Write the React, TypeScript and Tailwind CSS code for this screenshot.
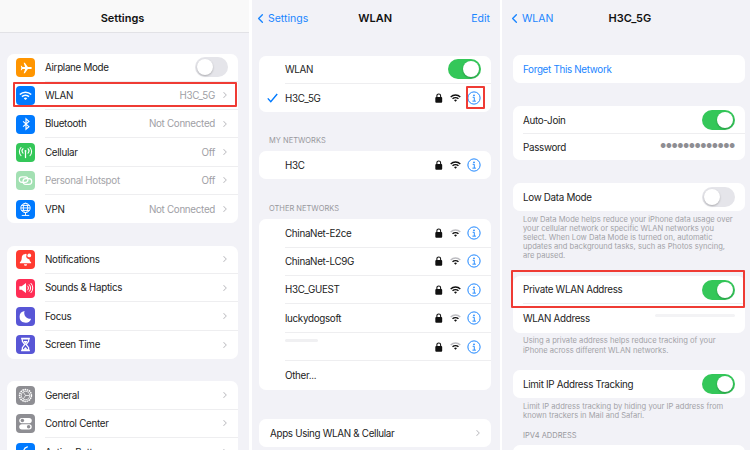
import React from "react";
import { ChevronLeft, ChevronRight } from "lucide-react";

const Plane = () => (
  <svg viewBox="0 0 24 24" className="w-[14px] h-[14px]" fill="#fff"><path d="M22 12c0-1-1-1.700-2.200-1.700h-4.600L10 3H8l2.500 7.300H6L4.300 8H3l1 4-1 4h1.300L6 13.700h4.500L8 21h2l5.200-7.300h4.600C21 13.700 22 13 22 12z" /></svg>
);
const WifiGlyph = ({ c = "#fff", w = 14, faint = false }: { c?: string; w?: number; faint?: boolean }) => (
  <svg viewBox="0 0 24 18" style={{ width: w, height: (w * 18) / 24 }} fill="none" stroke={c} strokeWidth="3" strokeLinecap="butt">
    <path d="M1.500 6.500a15 15 0 0 1 21 0" stroke={faint ? "#bdbdc2" : c} />
    <path d="M5.500 10.500a9.500 9.500 0 0 1 13 0" />
    <path d="M12 16.800 8.800 13.700a4.600 4.600 0 0 1 6.400 0z" fill={c} stroke="none" />
  </svg>
);
const Bt = () => (
  <svg viewBox="0 0 24 24" className="w-[14px] h-[14px]" fill="none" stroke="#fff" strokeWidth="2"><path d="M7 7.500l10 9-5 4.500V3l5 4.500-10 9" /></svg>
);
const Antenna = () => (
  <svg viewBox="0 0 24 24" className="w-[15px] h-[15px]" fill="none" stroke="#fff" strokeWidth="1.700" strokeLinecap="round"><path d="M12 11v9" strokeWidth="2" /><circle cx="12" cy="9.500" r="1.600" fill="#fff" stroke="none" /><path d="M8 6c-2 2-2 5 0 7M16 6c2 2 2 5 0 7M4.800 4c-3.400 3.500-3.400 9.500 0 13M19.200 4c3.400 3.500 3.400 9.500 0 13" /></svg>
);
const Chain = () => (
  <svg viewBox="0 0 24 24" className="w-[15px] h-[15px]" fill="none" stroke="#fff" strokeWidth="2"><rect x="2" y="6" width="14" height="9" rx="4.500" /><rect x="8" y="9" width="14" height="9" rx="4.500" /></svg>
);
const Globe = () => (
  <svg viewBox="0 0 24 24" className="w-[15px] h-[15px]" fill="none" stroke="#fff" strokeWidth="1.500"><circle cx="12" cy="9.500" r="7.500" /><ellipse cx="12" cy="9.500" rx="3.500" ry="7.500" /><path d="M4.500 9.500h15M5.500 5.500h13M5.500 13.500h13M12 17v4M6 21.500h12" /></svg>
);
const Bell = () => (
  <svg viewBox="0 0 24 24" className="w-[15px] h-[15px]" fill="#fff"><path d="M12 3c-4 0-6 3-6 6.500 0 3-1 5-3 7v1.500h18V16.500c-1.500-1.500-2.500-3-2.800-5A4.500 4.500 0 0 1 13.500 5.500c0-1 .2-1.500.4-2.200A6 6 0 0 0 12 3z" /><circle cx="18" cy="5.500" r="3" /><path d="M9.500 19.500h5a2.500 2.500 0 0 1-5 0z" /></svg>
);
const Sound = () => (
  <svg viewBox="0 0 24 24" className="w-[16px] h-[16px]" fill="#fff"><path d="M2 9.500h3.500L12 4.500v15l-6.500-5H2z" /><path d="M14.500 9a4 4 0 0 1 0 6M17 7a7 7 0 0 1 0 10M19.500 5a10 10 0 0 1 0 14" fill="none" stroke="#fff" strokeWidth="1.500" strokeLinecap="round" /></svg>
);
const Moon = () => (
  <svg viewBox="0 0 24 24" className="w-[15px] h-[15px]" fill="#fff"><path d="M10.500 3a9.500 9.500 0 1 0 10.500 12.500A9.500 9.500 0 0 1 10.500 3z" /></svg>
);
const Hourglass = () => (
  <svg viewBox="0 0 24 24" className="w-[15px] h-[15px]" fill="none" stroke="#fff" strokeWidth="2"><path d="M5 2.500h14M5 21.500h14" strokeWidth="2.600" /><path d="M7 3.500v3.500l4 5-4 5v3.500h10v-3.500l-4-5 4-5V3.500" /><path d="M8.500 6.500h7L12 11zM8.500 20l3.500-4 3.500 4z" fill="#fff" stroke="none" /></svg>
);
const Gear = () => (
  <svg viewBox="0 0 24 24" className="w-[15px] h-[15px]" fill="none" stroke="#fff"><circle cx="12" cy="12" r="9.500" strokeWidth="2.400" strokeDasharray="2.500 1" /><circle cx="12" cy="12" r="6.800" strokeWidth="1.200" /><path d="M12 12 8.500 6.500M12 12h6.500M12 12l-3.500 5.500" strokeWidth="1.200" /></svg>
);
const Toggles = () => (
  <svg viewBox="0 0 24 24" className="w-[15px] h-[15px]"><rect x="2" y="3" width="20" height="8.500" rx="4.250" fill="#fff" /><circle cx="7" cy="7.250" r="2.800" fill="#8e8e93" /><rect x="2" y="13" width="20" height="8.500" rx="4.250" fill="#fff" /><circle cx="17" cy="17.250" r="2.800" fill="#8e8e93" /></svg>
);
const Action = () => (
  <svg viewBox="0 0 24 24" className="w-[15px] h-[15px]" fill="none" stroke="#fff" strokeWidth="2"><path d="M15 3c-4 1-6 4-6 8" strokeLinecap="round" /></svg>
);

const Toggle = ({ on }: { on: boolean }) => (
  <div className={`w-[33px] h-[20px] rounded-full p-[2px] flex shrink-0 ${on ? "bg-[#34c759] justify-end" : "bg-[#e5e5ea] justify-start"}`}>
    <div className="w-[16px] h-[16px] rounded-full bg-white shadow-[0_1px_2px_rgba(0,0,0,0.25)]" />
  </div>
);

const Chev = () => <ChevronRight className="w-[10px] h-[10px] text-[#c0c0c4] shrink-0" strokeWidth={2.500} />;

type SRow = { icon: React.ReactNode; bg: string; label: string; value?: string; toggle?: boolean; dim?: boolean };

const SettingRow = ({ r, last }: { r: SRow; last: boolean }) => (
  <div className="h-[28.300px] flex items-center pl-[9px] shrink-0">
    <div className="w-[19px] h-[19px] rounded-[4px] flex items-center justify-center shrink-0" style={{ background: r.bg }}>{r.icon}</div>
    <div className={`ml-[10px] flex-1 h-full flex items-center pr-[8px] ${last ? "" : "border-b border-[#eeeef0]"}`}>
      <span className={`flex-1 pt-[2px] ${r.dim ? "text-[#a4a4a8]" : "text-[#222]"}`}>{r.label}</span>
      {r.toggle ? <div className="mr-[2px]"><Toggle on={false} /></div> : (
        <>
          {r.value && <span className="text-[#a0a0a5] mr-[5px] pt-[2px]">{r.value}</span>}
          <Chev />
        </>
      )}
    </div>
  </div>
);

const Card = ({ children, className = "" }: { children: React.ReactNode; className?: string }) => (
  <div className={`bg-white rounded-[7px] overflow-hidden ${className}`}>{children}</div>
);

const group1: SRow[] = [
  { icon: <Plane />, bg: "#ff9500", label: "Airplane Mode", toggle: true },
  { icon: <WifiGlyph w={13} />, bg: "#007aff", label: "WLAN", value: "H3C_5G" },
  { icon: <Bt />, bg: "#007aff", label: "Bluetooth", value: "Not Connected" },
  { icon: <Antenna />, bg: "#34c759", label: "Cellular", value: "Off" },
  { icon: <Chain />, bg: "#a3e0b3", label: "Personal Hotspot", value: "Off", dim: true },
  { icon: <Globe />, bg: "#007aff", label: "VPN", value: "Not Connected" },
];
const group2: SRow[] = [
  { icon: <Bell />, bg: "#ff3b30", label: "Notifications" },
  { icon: <Sound />, bg: "#ff2d55", label: "Sounds & Haptics" },
  { icon: <Moon />, bg: "#5856d6", label: "Focus" },
  { icon: <Hourglass />, bg: "#5856d6", label: "Screen Time" },
];
const group3: SRow[] = [
  { icon: <Gear />, bg: "#8e8e93", label: "General" },
  { icon: <Toggles />, bg: "#8e8e93", label: "Control Center" },
  { icon: <Action />, bg: "#007aff", label: "Action Button" },
];

const Lock = () => (
  <svg viewBox="0 0 12 16" className="w-[7.500px] h-[10px] shrink-0"><path d="M3 7V4.500a3 3 0 0 1 6 0V7" fill="none" stroke="#111" strokeWidth="1.700" /><rect x="0.500" y="6.500" width="11" height="9" rx="1.500" fill="#111" /></svg>
);
const Info = () => (
  <svg viewBox="0 0 24 24" className="w-[14px] h-[14px] shrink-0" fill="none" stroke="#1a85ff" strokeWidth="1.700"><circle cx="12" cy="12" r="10.500" /><circle cx="12" cy="7.300" r="1.500" fill="#1a85ff" stroke="none" /><path d="M9.700 10.800h2.800v6.400M9.300 17.400h6" strokeWidth="1.600" /></svg>
);

const NetRow = ({ name, check, strong = true, last, blurred }: { name: string; check?: boolean; strong?: boolean; last?: boolean; blurred?: boolean }) => (
  <div className="h-[28.400px] flex items-center shrink-0">
    <div className="w-[26px] pl-[8px] shrink-0">
      {check && <svg viewBox="0 0 14 12" className="w-[11px] h-[10px]" fill="none" stroke="#007aff" strokeWidth="1.800"><path d="M1 6.500l3.800 4.200L13 1" /></svg>}
    </div>
    <div className={`flex-1 h-full flex items-center pr-[10px] ${last ? "" : "border-b border-[#eeeef0]"}`}>
      <div className="flex-1 pt-[2px] text-[#222]">
        {blurred ? <div className="-mt-[9px] w-[33px] h-[3px] bg-[#f0f0f2] rounded-full" /> : name}
      </div>
      <Lock />
      <div className="ml-[7.500px] mr-[6px]"><WifiGlyph c="#111" w={11} faint={!strong} /></div>
      <Info />
    </div>
  </div>
);

const Foot = ({ children, className = "" }: { children: React.ReactNode; className?: string }) => (
  <p className={`px-[10px] text-[7.600px] leading-[9.100px] tracking-normal text-[#a2a2a7] whitespace-nowrap ${className}`}>{children}</p>
);
const Sect = ({ children, className = "" }: { children: React.ReactNode; className?: string }) => (
  <p className={`pl-[10px] text-[7.500px] leading-[10px] tracking-normal text-[#98989d] ${className}`}>{children}</p>
);
const SimpleRow = ({ label, right, border }: { label: string; right?: React.ReactNode; border?: boolean }) => (
  <div className="h-[28.500px] pl-[10px] flex items-center">
    <div className={`flex-1 h-full flex items-center pr-[10px] ${border ? "border-b border-[#eeeef0]" : ""}`}>
      <span className="flex-1 pt-[2px] text-[#222]">{label}</span>
      {right}
    </div>
  </div>
);

export default function App() {
  return (
    <div className="w-[750px] h-[450px] overflow-hidden bg-white flex text-[9.800px] tracking-[-0.300px] font-['Inter','Liberation_Sans',sans-serif]">
      <div className="relative w-[249px] h-full bg-[#f2f2f7] shrink-0 overflow-hidden">
        <div className="h-[33px] bg-[#f9f9f9] border-b border-[#e2e2e6] flex items-center justify-center pr-[4px]">
          <span className="text-[11px] tracking-normal font-semibold text-[#111] pt-[5px]">Settings</span>
        </div>
        <div className="pl-[7px] pr-[11px] pt-[20.500px] flex flex-col gap-[22.500px]">
          <Card>{group1.map((r, i) => <SettingRow key={r.label} r={r} last={i === group1.length - 1} />)}</Card>
          <Card>{group2.map((r, i) => <SettingRow key={r.label} r={r} last={i === group2.length - 1} />)}</Card>
          <Card>{group3.map((r, i) => <SettingRow key={r.label} r={r} last={i === group3.length - 1} />)}</Card>
        </div>
        <div className="absolute left-[13px] top-[82px] w-[224px] h-[25px] border-2 border-[#ef3b34] rounded-[1px]" />
      </div>

      <div className="relative ml-[3px] w-[248px] h-full bg-[#f2f2f7] shrink-0 overflow-hidden">
        <div className="h-[37px] flex items-center relative pl-[1px] pr-[10px] tracking-normal">
          <ChevronLeft className="w-[15px] h-[15px] text-[#1a85ff]" strokeWidth={2.200} />
          <span className="text-[10.500px] text-[#1a85ff]">Settings</span>
          <span className="flex-1 text-center text-[11px] font-semibold text-[#111] pr-[29px]">WLAN</span>
          <span className="text-[10.500px] text-[#1a85ff]">Edit</span>
        </div>
        <div className="pl-[7px] pr-[9px] pt-[18.500px]">
          <Card>
            <div className="h-[28.500px] flex items-center">
              <div className="w-[26px] shrink-0" />
              <div className="flex-1 h-full flex items-center pr-[10px] border-b border-[#eeeef0]">
                <span className="flex-1 pt-[2px] text-[#222]">WLAN</span>
                <Toggle on />
              </div>
            </div>
            <NetRow name="H3C_5G" check last />
          </Card>
          <Sect className="mt-[23.500px] mb-[5px]">MY NETWORKS</Sect>
          <Card><NetRow name="H3C" last /></Card>
          <Sect className="mt-[25px] mb-[5px]">OTHER NETWORKS</Sect>
          <Card>
            <NetRow name="ChinaNet-E2ce" strong={false} />
            <NetRow name="ChinaNet-LC9G" strong={false} />
            <NetRow name="H3C_GUEST" />
            <NetRow name="luckydogsoft" strong={false} />
            <NetRow name="" strong={false} blurred />
            <div className="h-[28.400px] flex items-center pl-[26px] pt-[2px] text-[#222]">Other...</div>
          </Card>
          <Card className="mt-[29.600px]">
            <div className="h-[28px] flex items-center pl-[11px] pr-[8px]">
              <span className="flex-1 pt-[2px] text-[#222]">Apps Using WLAN &amp; Cellular</span>
              <Chev />
            </div>
          </Card>
        </div>
        <div className="absolute left-[214px] top-[86px] w-[19px] h-[23px] border-2 border-[#ef3b34] rounded-[1px]" />
      </div>

      <div className="relative ml-[2px] flex-1 h-full bg-[#f2f2f7] overflow-hidden">
        <div className="h-[37px] flex items-center relative pl-[5px] tracking-normal">
          <ChevronLeft className="w-[15px] h-[15px] text-[#1a85ff]" strokeWidth={2.200} />
          <span className="text-[10.500px] text-[#1a85ff]">WLAN</span>
          <span className="text-[11px] font-semibold text-[#111] ml-[55px]">H3C_5G</span>
        </div>
        <div className="pl-[11px] pr-[5px] pt-[18px]">
          <Card><div className="h-[28px] flex items-center pl-[10px] pt-[2px] text-[#1a85ff]">Forget This Network</div></Card>
          <Card className="mt-[23px]">
            <div className="h-[28px] pl-[10px] flex items-center">
              <div className="flex-1 h-full flex items-center pr-[10px] border-b border-[#eeeef0]">
                <span className="flex-1 pt-[3px] text-[#222]">Auto-Join</span>
                <Toggle on />
              </div>
            </div>
            <div className="h-[26px] pl-[10px] pr-[10px] flex items-center">
              <span className="flex-1 pt-[2px] text-[#222]">Password</span>
              <span className="text-[#8e8e93] text-[6.300px] tracking-normal">●●●●●●●●●●●●●</span>
            </div>
          </Card>
          <Card className="mt-[23px] h-[28px]"><SimpleRow label="Low Data Mode" right={<Toggle on={false} />} /></Card>
          <Foot className="mt-[3.500px]">Low Data Mode helps reduce your iPhone data usage over<br />your cellular network or specific WLAN networks you<br />select. When Low Data Mode is turned on, automatic<br />updates and background tasks, such as Photos syncing,<br />are paused.</Foot>
          <Card className="mt-[16px]">
            <SimpleRow label="Private WLAN Address" border right={<Toggle on />} />
            <SimpleRow label="WLAN Address" right={<div className="w-[80px] h-[3px] -mt-[7px] bg-[#f3f3f5] rounded-full" />} />
          </Card>
          <Foot className="mt-[3.500px]">Using a private address helps reduce tracking of your<br />iPhone across different WLAN networks.</Foot>
          <Card className="mt-[15px] h-[28px]"><SimpleRow label="Limit IP Address Tracking" right={<Toggle on />} /></Card>
          <Foot className="mt-[4px]">Limit IP address tracking by hiding your IP address from<br />known trackers in Mail and Safari.</Foot>
          <Sect className="mt-[11px] mb-[4px]">IPV4 ADDRESS</Sect>
          <Card><div className="h-[28px]" /></Card>
        </div>
        <div className="absolute left-[9px] top-[270px] w-[234px] h-[38px] border-2 border-[#ef3b34] rounded-[1px]" />
      </div>
    </div>
  );
}
